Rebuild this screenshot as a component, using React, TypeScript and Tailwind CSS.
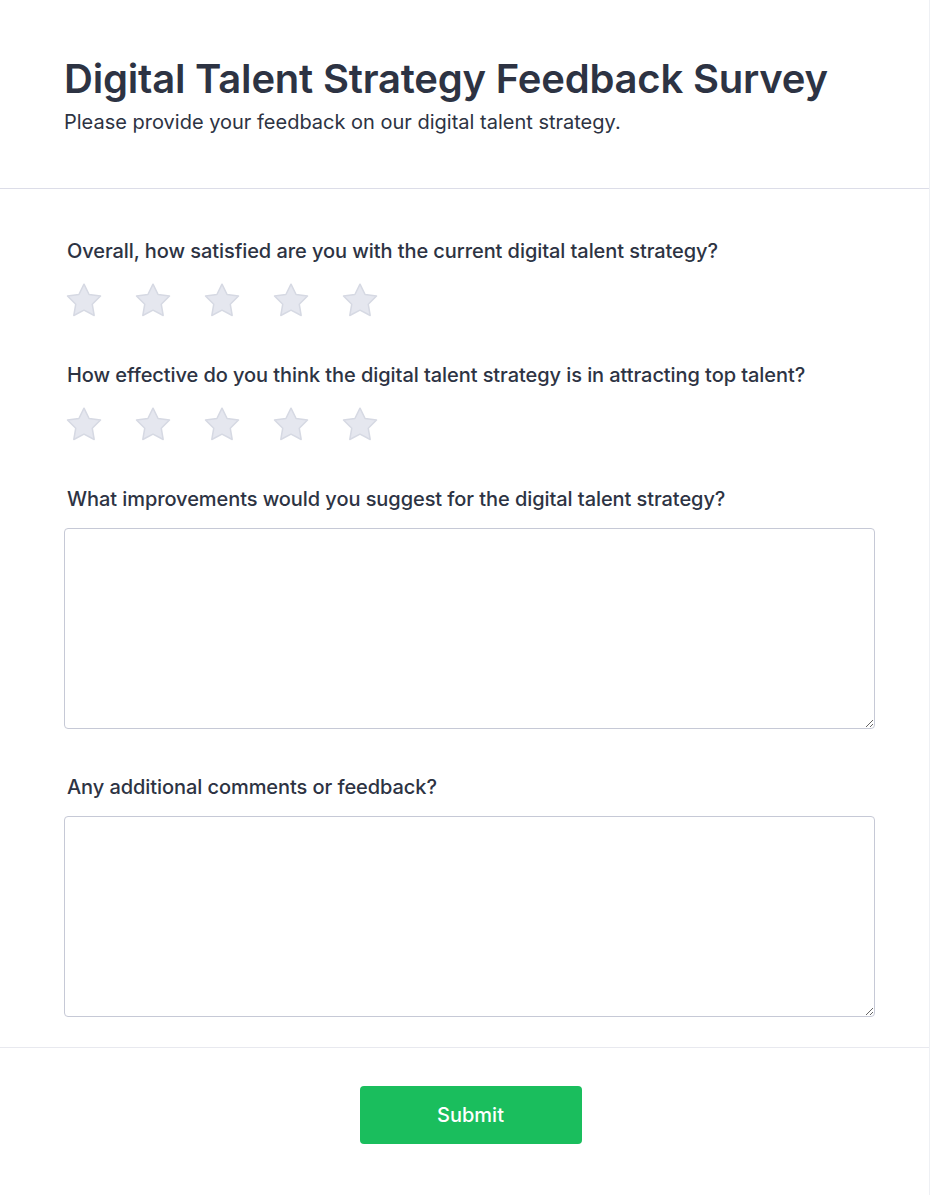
import React from "react";

function Star() {
  return (
    <svg width="40" height="40" viewBox="0 0 24 24" className="shrink-0">
      <path
        d="M12 1.9l3.05 6.2 6.85.95-4.95 4.85 1.17 6.8L12 17.5l-6.12 3.2 1.17-6.8L2.1 9.05l6.85-.95z"
        fill="#e5e7ef"
        stroke="#d6d9e3"
        strokeWidth="0.9"
        strokeLinejoin="round"
      />
    </svg>
  );
}

function Stars() {
  return (
    <div className="flex gap-[29px] ml-[64px]">
      {[0, 1, 2, 3, 4].map((i) => (
        <Star key={i} />
      ))}
    </div>
  );
}

export default function App() {
  const font = { fontFamily: "Inter, 'Noto Sans', sans-serif" };
  return (
    <div className="w-[930px] min-h-[1195px] bg-white text-[#2d3343] border-r border-[#eef0f4]" style={font}>
      <header className="px-16 pt-[59px] pb-[52px] border-b border-[#dcdde8]">
        <h1 className="text-[40px] leading-[40px] font-semibold tracking-[-0.2px] text-[#2d3343]">
          Digital Talent Strategy Feedback Survey
        </h1>
        <p className="mt-[9px] text-[20px] leading-[28px] text-[#2d3343]">
          Please provide your feedback on our digital talent strategy.
        </p>
      </header>
      <main className="pt-[48px] pb-[30px]">
        <div>
          <label className="block pl-[67px] text-[20px] leading-[28px] font-medium tracking-[-0.07px]">
            Overall, how satisfied are you with the current digital talent strategy?
          </label>
          <div className="mt-[16px]">
            <Stars />
          </div>
        </div>
        <div className="mt-[40px]">
          <label className="block pl-[67px] text-[20px] leading-[28px] font-medium tracking-[-0.07px]">
            How effective do you think the digital talent strategy is in attracting top talent?
          </label>
          <div className="mt-[16px]">
            <Stars />
          </div>
        </div>
        <div className="mt-[40px] px-16">
          <label className="block pl-[3px] text-[20px] leading-[28px] font-medium tracking-[-0.07px]">
            What improvements would you suggest for the digital talent strategy?
          </label>
          <textarea className="mt-[15px] block w-[811px] h-[201px] border border-[#c6c9d6] rounded-[4px] resize-y" />
        </div>
        <div className="mt-[44px] px-16">
          <label className="block pl-[3px] text-[20px] leading-[28px] font-medium tracking-[-0.07px]">
            Any additional comments or feedback?
          </label>
          <textarea className="mt-[15px] block w-[811px] h-[201px] border border-[#c6c9d6] rounded-[4px] resize-y" />
        </div>
      </main>
      <footer className="border-t border-[#e8e9ef] pt-[38px] pb-[50px] pl-[12px] flex justify-center">
        <button className="w-[222px] h-[58px] rounded-[4px] bg-[#1abe5d] text-white text-[20px] font-medium">
          Submit
        </button>
      </footer>
    </div>
  );
}
